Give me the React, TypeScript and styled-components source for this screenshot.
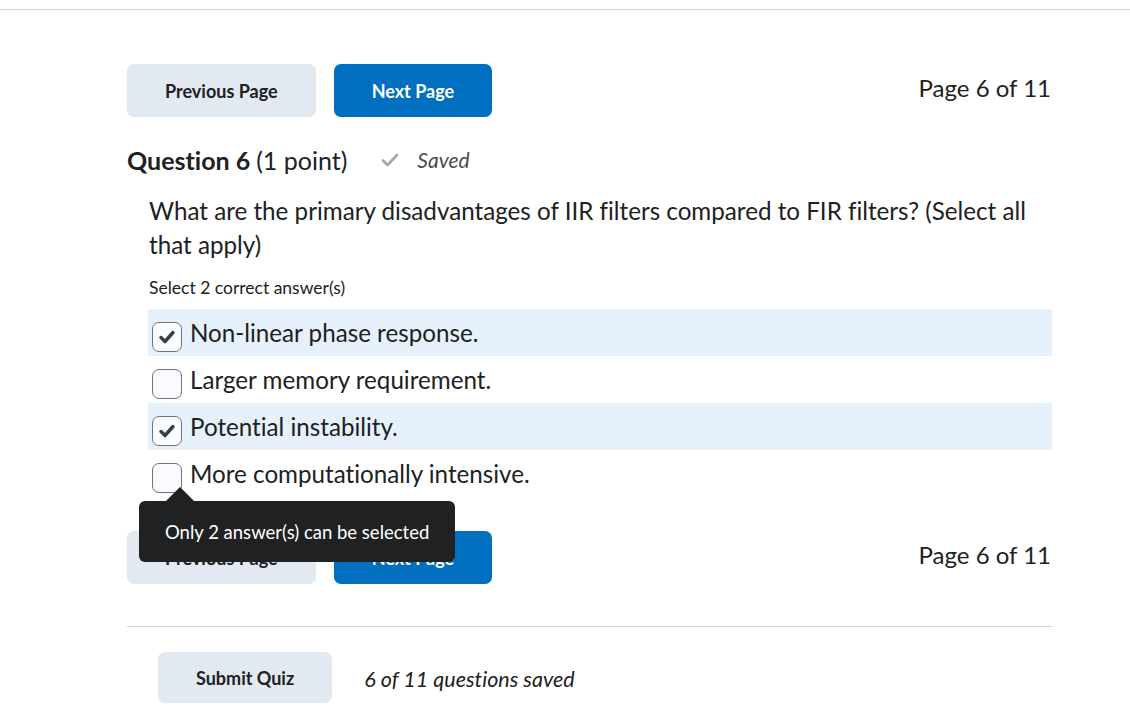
import React from "react";
import styled, { createGlobalStyle } from "styled-components";

const GlobalStyle = createGlobalStyle`
  html, body { margin: 0; padding: 0; background: #ffffff; }
  body {
    font-family: Lato, "Open Sans", "Liberation Sans", sans-serif;
    font-variant-ligatures: none;
    color: #202122;
  }
  * { box-sizing: border-box; }
`;

const TopBar = styled.div`
  height: 10px;
  border-bottom: 1px solid #cdd5dc;
`;

const Main = styled.main`
  width: 1052px;
  padding-left: 127px;
`;

const NavRow = styled.div<{ $top: number }>`
  margin-top: ${(p) => p.$top}px;
  display: flex;
  align-items: center;
  gap: 18px;
  height: 53px;
`;

const Button = styled.button<{ $primary?: boolean; $h?: number }>`
  height: ${(p) => p.$h ?? 53}px;
  padding: 0 38px;
  border: none;
  border-radius: 7px;
  font-family: inherit;
  font-variant-ligatures: none;
  font-size: 18px;
  font-weight: 700;
  background: ${(p) => (p.$primary ? "#006fbf" : "#e3e9f1")};
  color: ${(p) => (p.$primary ? "#ffffff" : "#202122")};
  cursor: pointer;
`;

const PageLabel = styled.div`
  margin-left: auto;
  margin-top: -7px;
  font-size: 24px;
  padding-right: 1px;
`;

const Heading = styled.h2`
  margin: 28px 0 0;
  display: flex;
  align-items: center;
  font-size: 25px;
  line-height: 30px;
  font-weight: 400;
`;

const Strong = styled.span`
  font-weight: 700;
  margin-right: 6px;
`;

const SavedTag = styled.span`
  display: inline-flex;
  align-items: center;
  margin-left: 34px;
  gap: 18px;
  font-size: 21px;
  font-style: italic;
  color: #494c4e;
`;

const QuestionBody = styled.div`
  padding-left: 22px;
`;

const QuestionText = styled.p`
  margin: 19px 0 0;
  font-size: 24.2px;
  line-height: 34px;
`;

const Hint = styled.div`
  margin-top: 14px;
  font-size: 17.5px;
  line-height: 24px;
`;

const Options = styled.div`
  margin: 9px 0 0 -1px;
  width: 904px;
`;

const OptionRow = styled.label<{ $checked?: boolean }>`
  position: relative;
  display: flex;
  align-items: center;
  height: 47px;
  padding-left: 4px;
  gap: 8px;
  background: ${(p) => (p.$checked ? "#e6f1fc" : "transparent")};
  font-size: 24.2px;
`;

const Box = styled.span`
  width: 30px;
  height: 30px;
  margin-top: 8px;
  flex: none;
  border: 1px solid #6e7376;
  border-radius: 7px;
  background: #f9fbff;
  display: flex;
  align-items: center;
  justify-content: center;
`;

const OptionText = styled.span`
  line-height: 30px;
`;

const Tooltip = styled.div`
  position: absolute;
  left: -9px;
  top: 51px;
  z-index: 5;
  height: 61px;
  padding: 0 26px;
  display: flex;
  align-items: center;
  background: #202122;
  color: #ffffff;
  border-radius: 6px;
  font-size: 18.5px;
  white-space: nowrap;
  &::before {
    content: "";
    position: absolute;
    left: 26px;
    top: -14px;
    border-left: 15px solid transparent;
    border-right: 15px solid transparent;
    border-bottom: 15px solid #202122;
  }
`;

const Divider = styled.hr`
  margin: 42px 0 0;
  border: none;
  border-top: 1px solid #cdd5dc;
  width: 925px;
`;

const SubmitRow = styled.div`
  margin-top: 25px;
  padding-left: 31px;
  display: flex;
  align-items: center;
  gap: 32px;
`;

const SavedCount = styled.span`
  font-size: 21.5px;
  font-style: italic;
  margin-top: 3px;
`;

const CheckMark = () => (
  <svg width="20" height="20" viewBox="0 0 20 20">
    <path
      d="M4 10.5 L8 14.5 L16 5.5"
      fill="none"
      stroke="#3a3d3f"
      strokeWidth="3.4"
      strokeLinecap="round"
      strokeLinejoin="round"
    />
  </svg>
);

const SavedCheck = () => (
  <svg width="18" height="16" viewBox="0 0 18 16">
    <path
      d="M2 8.5 L6.5 13 L16 3"
      fill="none"
      stroke="#a3a8ab"
      strokeWidth="2.6"
      strokeLinecap="round"
      strokeLinejoin="round"
    />
  </svg>
);

const options = [
  { text: "Non-linear phase response.", checked: true },
  { text: "Larger memory requirement.", checked: false },
  { text: "Potential instability.", checked: true },
  { text: "More computationally intensive.", checked: false, tooltip: true },
];

export default function App() {
  return (
    <>
      <GlobalStyle />
      <TopBar />
      <Main>
        <NavRow $top={54}>
          <Button>Previous Page</Button>
          <Button $primary>Next Page</Button>
          <PageLabel>Page 6 of 11</PageLabel>
        </NavRow>
        <Heading>
          <Strong>Question 6</Strong>(1 point)
          <SavedTag>
            <SavedCheck />
            Saved
          </SavedTag>
        </Heading>
        <QuestionBody>
          <QuestionText>
            What are the primary disadvantages of IIR filters compared to FIR filters? (Select all
            that apply)
          </QuestionText>
          <Hint>Select 2 correct answer(s)</Hint>
          <Options>
            {options.map((o) => (
              <OptionRow key={o.text} $checked={o.checked}>
                <Box>{o.checked && <CheckMark />}</Box>
                <OptionText>{o.text}</OptionText>
                {o.tooltip && <Tooltip>Only 2 answer(s) can be selected</Tooltip>}
              </OptionRow>
            ))}
          </Options>
        </QuestionBody>
        <NavRow $top={34}>
          <Button>Previous Page</Button>
          <Button $primary>Next Page</Button>
          <PageLabel>Page 6 of 11</PageLabel>
        </NavRow>
        <Divider />
        <SubmitRow>
          <Button $h={51}>Submit Quiz</Button>
          <SavedCount>6 of 11 questions saved</SavedCount>
        </SubmitRow>
      </Main>
    </>
  );
}
